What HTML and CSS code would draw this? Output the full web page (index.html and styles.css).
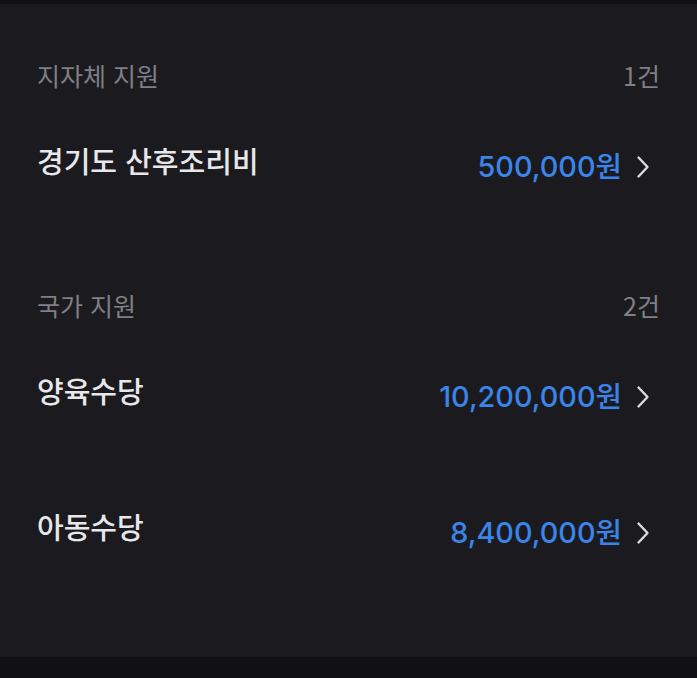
FILE: index.html
```html
<!DOCTYPE html>
<html lang="ko">
<head>
<meta charset="utf-8">
<link rel="stylesheet" href="styles.css">
</head>
<body>
<div class="screen">
  <div class="top-strip"></div>
  <main class="content">
    <section class="group">
      <div class="group-header">
        <span class="group-title">지자체 지원</span>
        <span class="group-count">1건</span>
      </div>
      <div class="item">
        <span class="item-title">경기도 산후조리비</span>
        <span class="item-right">
          <span class="amount">500,000원</span>
          <svg class="chev" viewBox="0 0 14 24" width="14" height="24"><path d="M2.5 2.5 L11.5 12 L2.5 21.5" fill="none" stroke="currentColor" stroke-width="2.4" stroke-linecap="round" stroke-linejoin="round"/></svg>
        </span>
      </div>
    </section>
    <section class="group">
      <div class="group-header">
        <span class="group-title">국가 지원</span>
        <span class="group-count">2건</span>
      </div>
      <div class="item">
        <span class="item-title">양육수당</span>
        <span class="item-right">
          <span class="amount">10,200,000원</span>
          <svg class="chev" viewBox="0 0 14 24" width="14" height="24"><path d="M2.5 2.5 L11.5 12 L2.5 21.5" fill="none" stroke="currentColor" stroke-width="2.4" stroke-linecap="round" stroke-linejoin="round"/></svg>
        </span>
      </div>
      <div class="item">
        <span class="item-title">아동수당</span>
        <span class="item-right">
          <span class="amount">8,400,000원</span>
          <svg class="chev" viewBox="0 0 14 24" width="14" height="24"><path d="M2.5 2.5 L11.5 12 L2.5 21.5" fill="none" stroke="currentColor" stroke-width="2.4" stroke-linecap="round" stroke-linejoin="round"/></svg>
        </span>
      </div>
    </section>
  </main>
  <div class="bottom-strip"></div>
</div>
</body>
</html>
```
FILE: styles.css
```css
* { box-sizing: border-box; }
html, body {
  margin: 0;
  padding: 0;
  background: #1b1b1f;
}
body {
  font-family: "Noto Sans CJK KR", "Noto Sans", sans-serif;
}
.screen {
  width: 697px;
  height: 678px;
  display: flex;
  flex-direction: column;
  background: #1b1b1f;
  overflow: hidden;
}
.top-strip {
  height: 4px;
  background: #111113;
  flex: none;
}
.content {
  flex: 1;
  padding: 51px 37px 0 37px;
  display: flex;
  flex-direction: column;
  gap: 54px;
}
.group {
  display: flex;
  flex-direction: column;
}
.group-header {
  height: 40px;
  display: flex;
  align-items: center;
  justify-content: space-between;
}
.group-title {
  font-size: 25px;
  color: #7f7f85;
}
.group-count {
  font-size: 25px;
  color: #7f7f85;
}
.item {
  display: flex;
  justify-content: space-between;
  align-items: flex-start;
  padding: 47px 0 46px 0;
}
.item-title {
  font-size: 29px;
  line-height: 36px;
  font-weight: 500;
  color: #e8e8eb;
}
.item-right {
  display: flex;
  align-items: center;
  gap: 14px;
  margin-top: 7px;
  margin-right: 10px;
  height: 36px;
}
.amount {
  font-family: "Inter", "Noto Sans CJK KR", sans-serif;
  font-size: 28.8px;
  font-weight: 500;
  color: #3a84ea;
  line-height: 36px;
}
.chev {
  color: #dcdcdf;
  flex: none;
}
.bottom-strip {
  height: 21px;
  background: #111113;
  flex: none;
}
```
